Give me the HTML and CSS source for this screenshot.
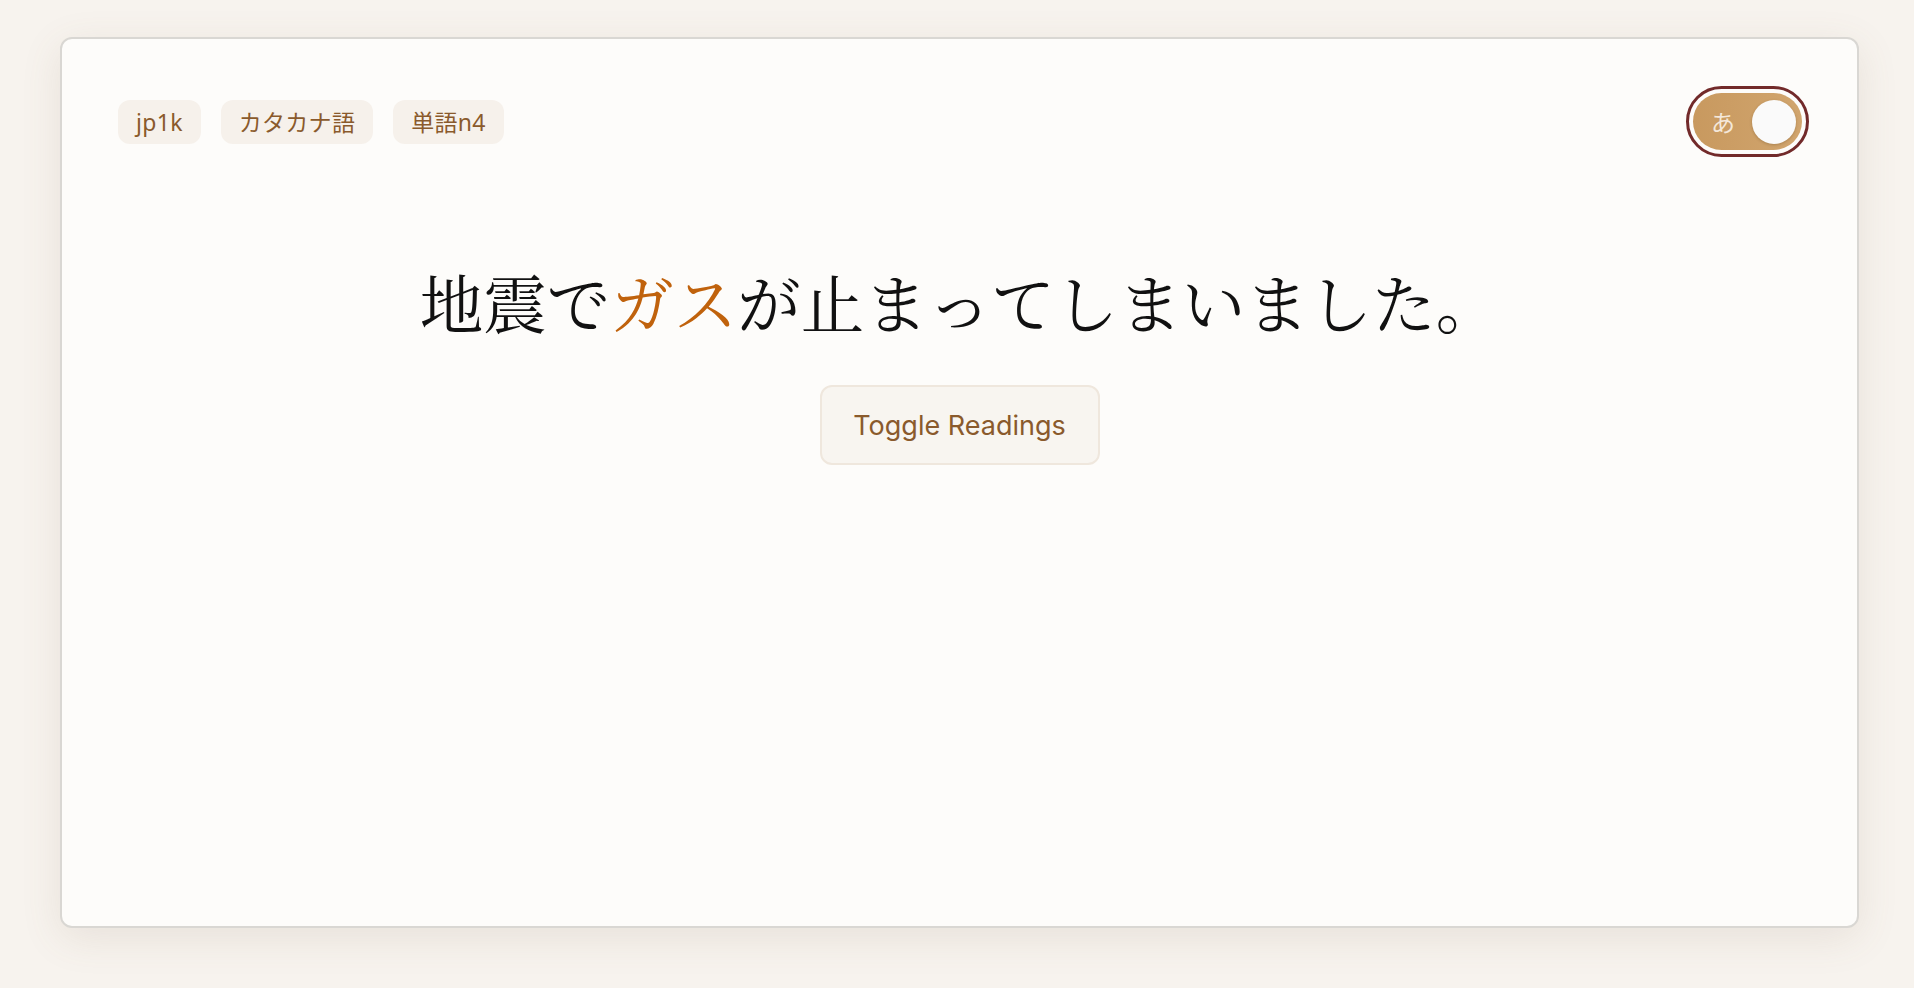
FILE: index.html
```html
<!DOCTYPE html>
<html lang="ja">
<head>
<meta charset="utf-8">
<title>Card</title>
<link rel="stylesheet" href="styles.css">
</head>
<body>
<main class="card">
  <header class="card-head">
    <div class="tags">
      <span class="tag">jp1k</span>
      <span class="tag">カタカナ語</span>
      <span class="tag">単語n4</span>
    </div>
    <div class="toggle-ring">
      <div class="toggle">
        <span class="toggle-label">あ</span>
        <span class="knob"></span>
      </div>
    </div>
  </header>
  <section class="body">
    <p class="sentence">地震で<span class="hl">ガス</span>が止まってしまいました。</p>
    <button class="btn">Toggle Readings</button>
  </section>
</main>
</body>
</html>
```
FILE: styles.css
```css
html, body {
  margin: 0;
  padding: 0;
}
body {
  background: #f7f3ee;
  padding: 37px 55px 60px 60px;
  font-family: Inter, "Noto Sans", "Noto Sans CJK JP", sans-serif;
  box-sizing: border-box;
  height: 988px;
  overflow: hidden;
}
.card {
  height: 891px;
  box-sizing: border-box;
  background: #fdfcfa;
  border: 2px solid #d9d7d3;
  border-radius: 12px;
  box-shadow: 0 10px 40px rgba(120, 100, 70, 0.12);
  padding: 47px 48px 0 48px;
}
.card-head {
  display: flex;
  justify-content: space-between;
  align-items: center;
}
.tags {
  display: flex;
  gap: 20px;
  margin-left: 8px;
}
.tag {
  background: #f6f1eb;
  color: #8a5a2c;
  font-family: "Noto Sans", "Noto Sans CJK JP", sans-serif;
  font-size: 23px;
  letter-spacing: 0.3px;
  line-height: 28px;
  padding: 8px 18px;
  border-radius: 12px;
}
.toggle-ring {
  border: 3px solid #722a2a;
  border-radius: 40px;
  padding: 4px;
  background: #fdfcfa;
}
.toggle {
  width: 109px;
  height: 57px;
  box-sizing: border-box;
  border-radius: 30px;
  background: linear-gradient(90deg, #c8995f, #d1a56e);
  display: flex;
  align-items: center;
  justify-content: space-between;
  padding: 0 6px 0 18px;
}
.toggle-label {
  color: #f4e8da;
  font-family: "Noto Sans CJK JP", sans-serif;
  font-size: 24px;
  line-height: 1;
}
.knob {
  width: 44px;
  height: 44px;
  border-radius: 50%;
  background: #fafafa;
  box-shadow: 0 1px 3px rgba(90, 60, 20, 0.3);
}
.body {
  display: flex;
  flex-direction: column;
  align-items: center;
}
.sentence {
  margin: 97px 0 0;
  font-family: "Noto Serif CJK JP", "Noto Sans CJK JP", serif;
  font-size: 63.5px;
  line-height: 93px;
  color: #111;
}
.hl {
  color: #c0620c;
}
.btn {
  margin-top: 38px;
  width: 280px;
  height: 80px;
  background: #f8f5f0;
  border: 2px solid #efe7dd;
  border-radius: 12px;
  color: #8a5a2c;
  font-family: Inter, sans-serif;
  font-size: 27px;
  cursor: pointer;
}
```
